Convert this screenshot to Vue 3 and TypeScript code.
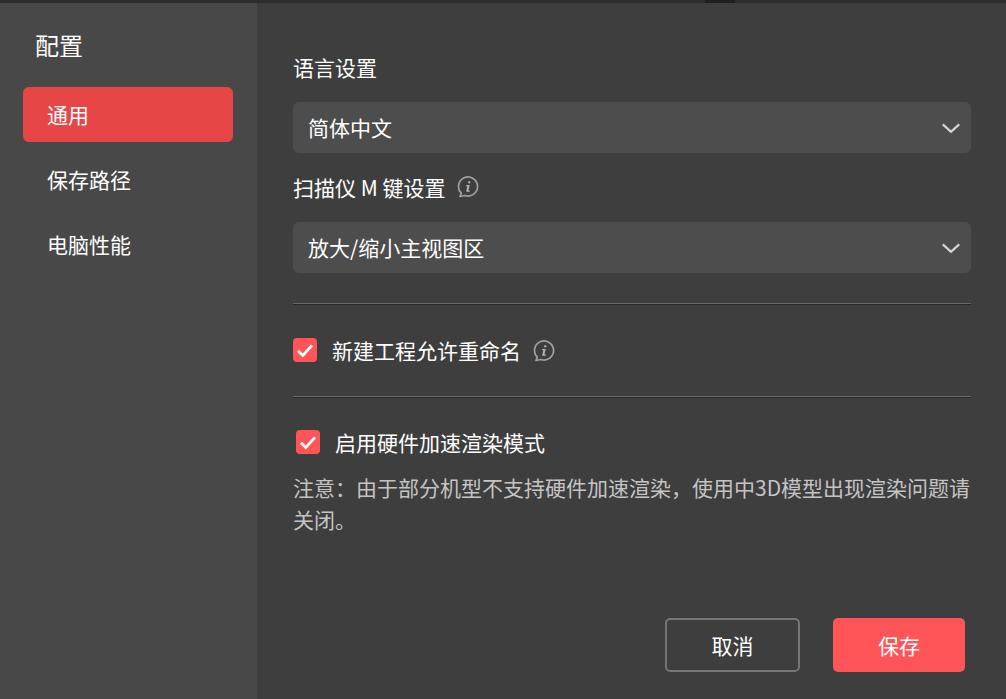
<template>
  <div class="dialog">
    <div class="topbar"><span class="topbar__tab"></span></div>
    <div class="dialog__body">
      <aside class="sidebar">
        <h2 class="sidebar__title">配置</h2>
        <nav class="sidebar__nav">
          <a
            v-for="(item, i) in menu"
            :key="item"
            class="sidebar__item"
            :class="{ 'sidebar__item--active': i === 0 }"
          >{{ item }}</a>
        </nav>
      </aside>

      <main class="content">
        <div class="label label--first">语言设置</div>
        <div class="select">
          <span>简体中文</span>
          <svg class="select__arrow" width="20" height="12" viewBox="0 0 20 12">
            <path d="M1.8 2.4 L10 9.8 L18.2 2.4" fill="none" stroke="#d4d4d4" stroke-width="2.3" />
          </svg>
        </div>

        <div class="label label--second">
          <span>扫描仪 M 键设置</span>
          <svg class="info" width="22" height="22" viewBox="0 0 22 22">
            <path d="M4.3 17.2 A9.5 9.5 0 1 1 8 19.5 L3 20.5 Z" fill="none" stroke="#a0a0a0" stroke-width="1.7" stroke-linejoin="round" />
            <path d="M11.2 5.2 h2.1 v2.1 h-2.1 z M9.2 9 h3.5 l-1.3 5.4 h1.3 v1.3 h-3.6 l1.3 -5.4 h-1.2 z" fill="#b4b4b4" />
          </svg>
        </div>
        <div class="select">
          <span>放大/缩小主视图区</span>
          <svg class="select__arrow" width="20" height="12" viewBox="0 0 20 12">
            <path d="M1.8 2.4 L10 9.8 L18.2 2.4" fill="none" stroke="#d4d4d4" stroke-width="2.3" />
          </svg>
        </div>

        <hr class="divider divider--first" />

        <div class="check check--rename">
          <span class="check__box">
            <svg width="24" height="24" viewBox="0 0 24 24">
              <path d="M5 12.8 L9.8 17.4 L19 7.4" fill="none" stroke="#fff" stroke-width="2.8" />
            </svg>
          </span>
          <span class="check__text">新建工程允许重命名</span>
          <svg class="info" width="22" height="22" viewBox="0 0 22 22">
            <path d="M4.3 17.2 A9.5 9.5 0 1 1 8 19.5 L3 20.5 Z" fill="none" stroke="#a0a0a0" stroke-width="1.7" stroke-linejoin="round" />
            <path d="M11.2 5.2 h2.1 v2.1 h-2.1 z M9.2 9 h3.5 l-1.3 5.4 h1.3 v1.3 h-3.6 l1.3 -5.4 h-1.2 z" fill="#b4b4b4" />
          </svg>
        </div>

        <hr class="divider divider--second" />

        <div class="check check--accel">
          <span class="check__box">
            <svg width="24" height="24" viewBox="0 0 24 24">
              <path d="M5 12.8 L9.8 17.4 L19 7.4" fill="none" stroke="#fff" stroke-width="2.8" />
            </svg>
          </span>
          <span class="check__text">启用硬件加速渲染模式</span>
        </div>

        <p class="note">注意：由于部分机型不支持硬件加速渲染，使用中3D模型出现渲染问题请关闭。</p>

        <div class="actions">
          <button class="btn btn--cancel">取消</button>
          <button class="btn btn--save">保存</button>
        </div>
      </main>
    </div>
  </div>
</template>

<script setup lang="ts">
const menu: string[] = ['通用', '保存路径', '电脑性能']
</script>

<style>
html,
body {
  margin: 0;
  background: #3e3e3e;
}
</style>

<style scoped>
.dialog {
  width: 1006px;
  height: 699px;
  display: flex;
  flex-direction: column;
  overflow: hidden;
  background: #3e3e3e;
  color: #fff;
  font-family: 'Noto Sans CJK SC', 'Noto Sans', sans-serif;
  font-size: 21px;
  line-height: 30px;
}

.topbar {
  height: 3px;
  flex-shrink: 0;
  background: #2d2d2d;
  position: relative;
}

.topbar__tab {
  position: absolute;
  left: 705px;
  top: 0;
  width: 30px;
  height: 3px;
  background: #1f1f1f;
}

.dialog__body {
  flex: 1;
  display: flex;
  min-height: 0;
}

/* Левая колонка */
.sidebar {
  width: 257px;
  flex-shrink: 0;
  box-sizing: border-box;
  padding: 0 24px 0 23px;
  background: #484848;
}

.sidebar__title {
  margin: 27px 0 0 12px;
  font-size: 24px;
  line-height: 30px;
  font-weight: 400;
}

.sidebar__nav {
  display: flex;
  flex-direction: column;
  margin-top: 27px;
}

.sidebar__item {
  height: 55px;
  box-sizing: border-box;
  padding: 0 0 2px 24px;
  margin-bottom: 10px;
  display: flex;
  align-items: center;
  border-radius: 6px;
}

.sidebar__item--active {
  background: #e64646;
}

/* Контент */
.content {
  flex: 1;
  min-width: 0;
  padding: 0 35px 0 36px;
  display: flex;
  flex-direction: column;
}

.label {
  display: flex;
  align-items: center;
  height: 30px;
}

.label--first {
  margin-top: 49px;
}

.label--second {
  margin-top: 19px;
  gap: 12px;
}

.select {
  height: 51px;
  box-sizing: border-box;
  margin-top: 20px;
  padding: 0 10px 2px 15px;
  display: flex;
  align-items: center;
  justify-content: space-between;
  background: #4d4d4d;
  border-radius: 6px;
}

.select__arrow {
  flex-shrink: 0;
  margin-top: 2px;
}

.info {
  flex-shrink: 0;
}

.divider {
  width: 100%;
  height: 1px;
  margin: 0;
  border: 0;
  background: #6a6a6a;
  box-shadow: 0 1px 0 #282828;
}

.divider--first {
  margin-top: 30px;
}

.divider--second {
  margin-top: 34px;
}

.check {
  display: flex;
  align-items: center;
  height: 24px;
}

.check--rename {
  margin-top: 34px;
}

.check--accel {
  margin-top: 33px;
  margin-left: 3px;
}

.check--rename .info {
  margin: 2px 0 0 12px;
}

.check__box {
  width: 24px;
  height: 24px;
  flex-shrink: 0;
  background: #ff5558;
  border-radius: 4px;
}

.check__box svg {
  display: block;
}

.check__text {
  margin-left: 15px;
}

.note {
  margin: 17px 0 0;
  color: #c4c4c4;
  line-height: 32px;
}

.actions {
  margin-top: auto;
  margin-bottom: 27px;
  padding-right: 6px;
  display: flex;
  justify-content: flex-end;
  gap: 33px;
}

.btn {
  height: 54px;
  box-sizing: border-box;
  border-radius: 5px;
  color: #fff;
  font-family: inherit;
  font-size: 21px;
  cursor: pointer;
}

.btn--cancel {
  width: 135px;
  background: transparent;
  border: 2px solid #757575;
}

.btn--save {
  width: 132px;
  background: #ff5558;
  border: 0;
}
</style>
